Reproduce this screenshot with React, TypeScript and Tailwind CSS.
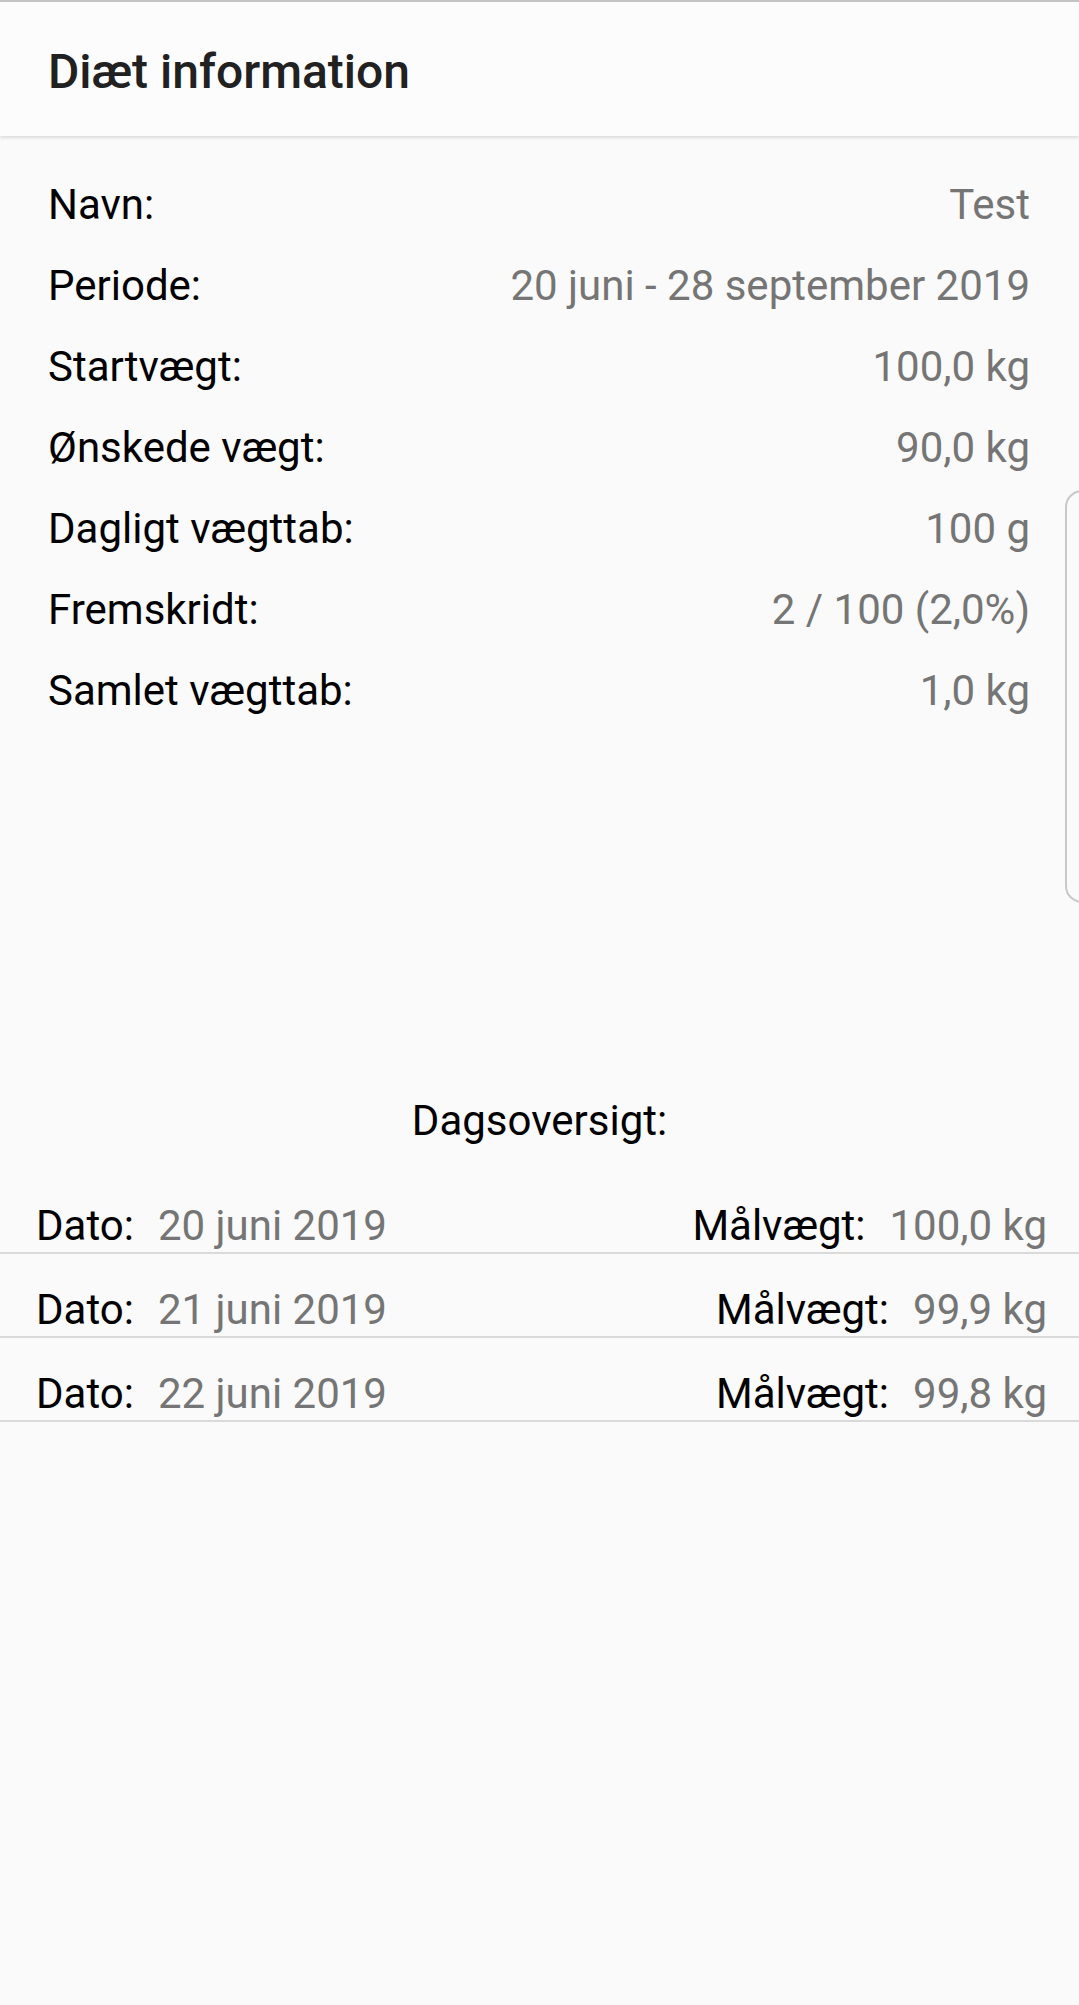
import React from 'react';

interface InfoRow {
  label: string;
  value: string;
}

interface DayRow {
  date: string;
  target: string;
}

const infoRows: InfoRow[] = [
  { label: 'Navn:', value: 'Test' },
  { label: 'Periode:', value: '20 juni - 28 september 2019' },
  { label: 'Startvægt:', value: '100,0 kg' },
  { label: 'Ønskede vægt:', value: '90,0 kg' },
  { label: 'Dagligt vægttab:', value: '100 g' },
  { label: 'Fremskridt:', value: '2 / 100 (2,0%)' },
  { label: 'Samlet vægttab:', value: '1,0 kg' }
];

const dayRows: DayRow[] = [
  { date: '20 juni 2019', target: '100,0 kg' },
  { date: '21 juni 2019', target: '99,9 kg' },
  { date: '22 juni 2019', target: '99,8 kg' }
];

export default function App() {
  return (
    <div className="relative min-h-[2005px] w-full bg-[#fafafa] font-['Roboto',sans-serif] text-[42px] text-black">
      {/* Toolbar */}
      <header className="flex h-[136px] items-center border-t-2 border-[#c4c4c4] bg-[#fcfcfc] px-[48px] pt-[5px] shadow-[0_2px_3px_rgba(0,0,0,0.12)]">
        <h1 className="text-[48px] font-medium text-[#212121]">Diæt information</h1>
      </header>

      {/* Diet info */}
      <div className="pt-[28px] pl-[48px] pr-[49px]">
        {infoRows.map((row) => (
          <div key={row.label} className="flex h-[81px] items-center justify-between leading-[81px]">
            <span>{row.label}</span>
            <span className="text-[#757575]">{row.value}</span>
          </div>
        ))}
      </div>

      <div className="mt-[360px] text-center leading-[60px]">Dagsoversigt:</div>

      {/* Day overview */}
      <ul role="list" className="mt-[19px]">
        {dayRows.map((day) => (
          <li
            key={day.date}
            className="flex h-[84px] items-end justify-between border-b-2 border-[#d9d9d9] pb-[2px] pl-[36px] pr-[32px] leading-[49px]">
            <div className="flex gap-[24px]">
              <span>Dato:</span>
              <span className="text-[#757575]">{day.date}</span>
            </div>
            <div className="flex gap-[24px]">
              <span>Målvægt:</span>
              <span className="text-[#757575]">{day.target}</span>
            </div>
          </li>
        ))}
      </ul>

      {/* Edge panel handle */}
      <div className="absolute top-[490px] right-[-20px] h-[413px] w-[34px] rounded-[18px] border-2 border-[#c8c8c8]" />
    </div>
  );
}
